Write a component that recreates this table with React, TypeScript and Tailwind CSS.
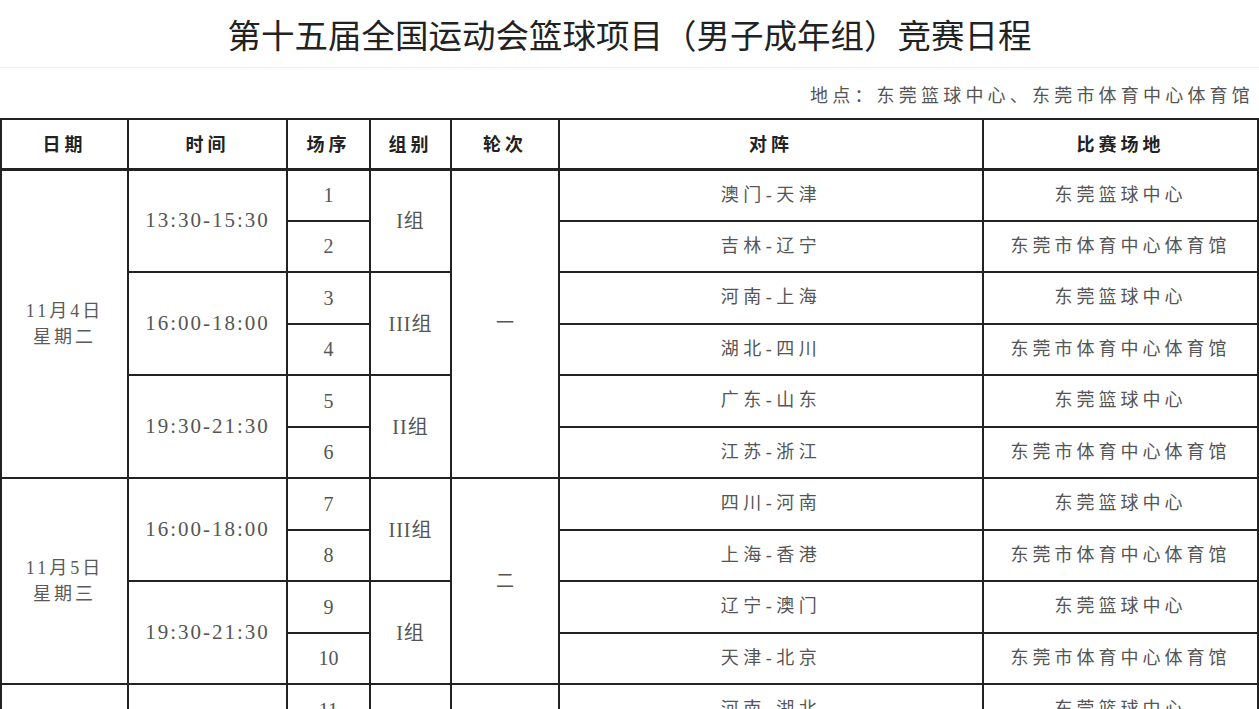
import React from 'react';

type Game = [number, string, string];
type Slot = { time: string; group: string; games: Game[] };
type Day = { date: string; week: string; round: string; slots: Slot[] };

const BASKET = '东莞篮球中心';
const GYM = '东莞市体育中心体育馆';

const days: Day[] = [
  {
    date: '11月4日',
    week: '星期二',
    round: '一',
    slots: [
      { time: '13:30-15:30', group: 'I组', games: [[1, '澳门-天津', BASKET], [2, '吉林-辽宁', GYM]] },
      { time: '16:00-18:00', group: 'III组', games: [[3, '河南-上海', BASKET], [4, '湖北-四川', GYM]] },
      { time: '19:30-21:30', group: 'II组', games: [[5, '广东-山东', BASKET], [6, '江苏-浙江', GYM]] },
    ],
  },
  {
    date: '11月5日',
    week: '星期三',
    round: '二',
    slots: [
      { time: '16:00-18:00', group: 'III组', games: [[7, '四川-河南', BASKET], [8, '上海-香港', GYM]] },
      { time: '19:30-21:30', group: 'I组', games: [[9, '辽宁-澳门', BASKET], [10, '天津-北京', GYM]] },
    ],
  },
  {
    // next day continues below the fold, only its first match shows
    date: '',
    week: '',
    round: '',
    slots: [{ time: '', group: '', games: [[11, '河南-湖北', BASKET]] }],
  },
];

const cell = 'border-2 border-[#222] text-center align-middle';
const body = "font-['Liberation_Serif','Noto_Sans_CJK_SC',serif] text-[#555]";

export default function App() {
  return (
    <div className="h-[709px] w-[1259px] overflow-hidden bg-white">
      {/* Title */}
      <div className="flex h-[68px] items-center justify-center border-b border-[#f1f1f1]">
        <h1 className="font-['Noto_Sans_CJK_SC',sans-serif] text-[33.5px] leading-none text-[#222]">
          第十五届全国运动会篮球项目（男子成年组）竞赛日程
        </h1>
      </div>

      {/* Venue */}
      <div className="flex h-[50px] justify-end pr-[5px] pt-[14px]">
        <span className="font-['Noto_Sans_CJK_SC',sans-serif] text-[18px] leading-6 tracking-[4.2px] text-[#555]">
          地点：东莞篮球中心、东莞市体育中心体育馆
        </span>
      </div>

      <table className="w-[1257px] table-fixed border-collapse">
        <colgroup>
          <col className="w-[127px]" />
          <col className="w-[159px]" />
          <col className="w-[83px]" />
          <col className="w-[81px]" />
          <col className="w-[108px]" />
          <col className="w-[424px]" />
          <col className="w-[275px]" />
        </colgroup>
        <thead>
          <tr className="h-[50px] font-['Noto_Sans_CJK_SC',sans-serif] text-[18px] font-semibold tracking-[4px] text-[#222]">
            {['日期', '时间', '场序', '组别', '轮次', '对阵', '比赛场地'].map(h => (
              <th key={h} className={`${cell} border-b-[3px]`}>
                {h}
              </th>
            ))}
          </tr>
        </thead>
        <tbody className={body}>
          {days.map(day => {
            const total = day.slots.reduce((n, s) => n + s.games.length, 0);
            return day.slots.map((slot, si) =>
              slot.games.map((g, gi) => (
                <tr key={g[0]} className="h-[51.5px]">
                  {si === 0 && gi === 0 && (
                    <td rowSpan={total} className={`${cell} text-[18px] leading-[26px] tracking-[3px] text-[#5a5a5a]`}>
                      <div>{day.date}</div>
                      <div>{day.week}</div>
                    </td>
                  )}
                  {gi === 0 && (
                    <td rowSpan={slot.games.length} className={`${cell} text-[21px] tracking-[2px]`}>
                      {slot.time}
                    </td>
                  )}
                  <td className={`${cell} text-[20px]`}>{g[0]}</td>
                  {gi === 0 && (
                    <td rowSpan={slot.games.length} className={`${cell} text-[20px] tracking-[1px]`}>
                      {slot.group}
                    </td>
                  )}
                  {si === 0 && gi === 0 && (
                    <td rowSpan={total} className={`${cell} text-[18px]`}>
                      {day.round}
                    </td>
                  )}
                  <td className={`${cell} text-[18px] tracking-[4.5px]`}>{g[1]}</td>
                  <td className={`${cell} text-[18px] tracking-[4px]`}>{g[2]}</td>
                </tr>
              ))
            );
          })}
        </tbody>
      </table>
    </div>
  );
}
